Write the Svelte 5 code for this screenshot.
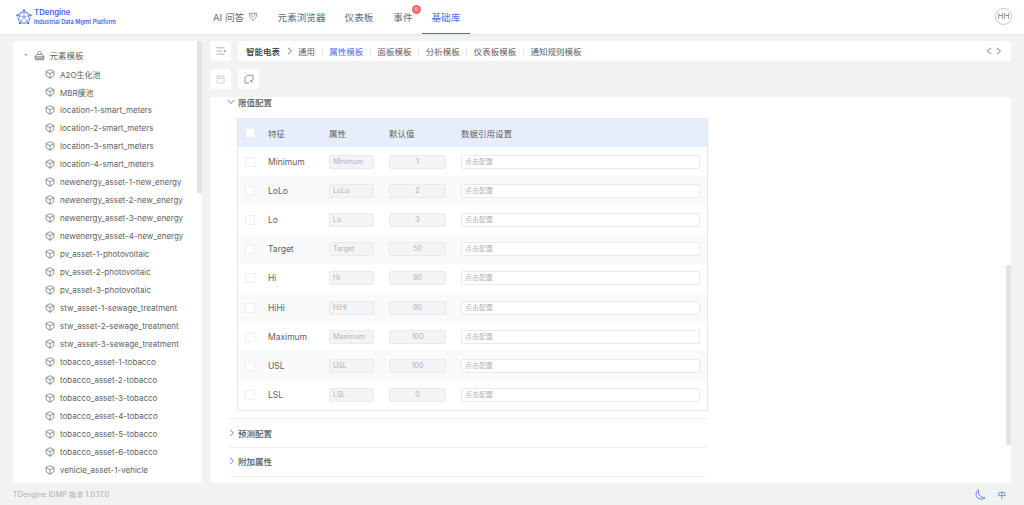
<script>
  const nav = ['元素浏览器', '仪表板'];
  const tree = ['A2O生化池','MBR膜池','location-1-smart_meters','location-2-smart_meters','location-3-smart_meters','location-4-smart_meters','newenergy_asset-1-new_energy','newenergy_asset-2-new_energy','newenergy_asset-3-new_energy','newenergy_asset-4-new_energy','pv_asset-1-photovoltaic','pv_asset-2-photovoltaic','pv_asset-3-photovoltaic','stw_asset-1-sewage_treatment','stw_asset-2-sewage_treatment','stw_asset-3-sewage_treatment','tobacco_asset-1-tobacco','tobacco_asset-2-tobacco','tobacco_asset-3-tobacco','tobacco_asset-4-tobacco','tobacco_asset-5-tobacco','tobacco_asset-6-tobacco','vehicle_asset-1-vehicle'];
  const tabs = ['面板模板','分析模板','仪表板模板','通知规则模板'];
  const rows = [['Minimum','1'],['LoLo','2'],['Lo','3'],['Target','50'],['Hi','80'],['HiHi','90'],['Maximum','100'],['USL','100'],['LSL','0']];
</script>

<div class="page">
  <header class="top">
    <div class="logo">
      <svg width="16" height="16" viewBox="0 0 18 18" fill="none" stroke="#4f74ee" stroke-width=".7">
        <path d="M9 1.500 16.500 7 13.700 16H4.300L1.500 7Z"/><path d="M9 1.500 9 9M1.500 7 9 9 16.500 7M4.300 16 9 9 13.700 16M5 4.300 13 4.300 15 11.500 9 16 3 11.500Z"/>
        <g fill="#3e63e8" stroke="none"><circle cx="9" cy="1.500" r="1.100"/><circle cx="1.500" cy="7" r="1.100"/><circle cx="16.500" cy="7" r="1.100"/><circle cx="4.300" cy="16" r="1.100"/><circle cx="13.700" cy="16" r="1.100"/></g>
      </svg>
      <div class="logotext"><b>TDengine</b><span>Industrial Data Mgmt Platform</span></div>
    </div>
    <nav>
      <a href="#a" class="ai">AI 问答
        <svg width="10" height="10" viewBox="0 0 10 10" fill="none" stroke="#74808f" stroke-width=".7" stroke-linejoin="round"><path d="M1 1.300H9L8.200 4.800 5 8.800 1.800 4.800ZM3 1.300C3 4 5 5 5 5S7 4 7 1.300"/></svg>
      </a>
      {#each nav as n}<a href="#a">{n}</a>{/each}
      <a href="#a" class="ev">事件<i>0</i></a>
      <a href="#a" class="on">基础库</a>
    </nav>
    <div class="avatar">HH</div>
  </header>

  <main class="body">
    <aside class="side">
      <div class="node root">
        <span class="caret"></span>
        <svg width="11" height="11" viewBox="0 0 11 11" fill="none" stroke="#666" stroke-width=".8" stroke-linejoin="round"><path d="M3.500 4.500C3.500 .5 7.500 .5 7.500 4.500ZM2.500 4.500 1 6.800H10L8.500 4.500M1 6.800V8.300H10V6.800M1 9.800H10"/></svg>
        元素模板
      </div>
      {#each tree as t}
        <div class="node leaf">
          <svg width="10" height="10" viewBox="0 0 10 10" fill="none" stroke="#666" stroke-width=".7" stroke-linejoin="round"><path d="M5 .7 9 2.600 8.700 6.800 5 9.300 1.300 6.800 1 2.600ZM1 2.600 5 4.600 9 2.600M5 4.600V9.300"/></svg>
          {t}
        </div>
      {/each}
      <div class="sbar"></div>
    </aside>

    <section class="right">
      <div class="bar">
        <button class="ib" aria-label="toggle">
          <svg width="10" height="10" viewBox="0 0 10 10" fill="none" stroke="#777" stroke-width=".6"><path d="M.5 1.800H8.500M.5 5H6M.5 8.200H8.500M9.200 4 7.800 5 9.200 6Z"/></svg>
        </button>
        <div class="tabs">
          <b>智能电表</b>
          <svg class="crumb" width="6" height="8" viewBox="0 0 6 8" fill="none" stroke="#555" stroke-width=".8"><path d="M1 .8 4.500 4 1 7.200"/></svg>
          <span>通用</span><em></em>
          <span class="act">属性模板</span>
          {#each tabs as t}<em></em><span>{t}</span>{/each}
          <div class="arrows">
            <svg width="6" height="8" viewBox="0 0 6 8" fill="none" stroke="#444" stroke-width=".7"><path d="M5 .8 1.500 4 5 7.200"/></svg>
            <svg width="6" height="8" viewBox="0 0 6 8" fill="none" stroke="#444" stroke-width=".7"><path d="M1 .8 4.500 4 1 7.200"/></svg>
          </div>
        </div>
      </div>
      <div class="bar">
        <button class="ib" aria-label="save">
          <svg width="9" height="9" viewBox="0 0 9 9" fill="none" stroke="#c4c4c4" stroke-width=".7"><path d="M1 1H8V8H1ZM2.500 1V3.500H6.500V1"/></svg>
        </button>
        <button class="ib" aria-label="copy">
          <svg width="10" height="10" viewBox="0 0 10 10" fill="none" stroke="#666" stroke-width=".7"><path d="M1 4 3.500 1.200H9V6.500M1 4V9H5M6 6 8.500 8.500M8.500 6 6 8.500"/></svg>
        </button>
      </div>
      <div class="content">
        <div class="sec-head first">
          <svg width="8" height="6" viewBox="0 0 8 6" fill="none" stroke="#666" stroke-width=".8"><path d="M.8 1 4 4.500 7.200 1"/></svg>
          <b>限值配置</b>
        </div>
        <div class="table">
          <div class="row head">
            <span class="cb"></span><span>特征</span><span>属性</span><span>默认值</span><span>数据引用设置</span>
          </div>
          {#each rows as r}
            <div class="row">
              <span class="cb"></span>
              <span>{r[0]}</span>
              <span class="inp dis">{r[0]}</span>
              <span class="inp dis num">{r[1]}</span>
              <span class="inp ph">点击配置</span>
            </div>
          {/each}
        </div>
        <div class="sec-head col">
          <svg width="6" height="8" viewBox="0 0 6 8" fill="none" stroke="#666" stroke-width=".8"><path d="M1 .8 4.500 4 1 7.200"/></svg>
          <b>预测配置</b>
        </div>
        <div class="sec-head col last">
          <svg width="6" height="8" viewBox="0 0 6 8" fill="none" stroke="#666" stroke-width=".8"><path d="M1 .8 4.500 4 1 7.200"/></svg>
          <b>附加属性</b>
        </div>
        <div class="sbar2"></div>
      </div>
    </section>
  </main>

  <footer class="foot">
    <span>TDengine IDMP 版本 1.0.17.0</span>
    <div class="fr">
      <svg width="11" height="11" viewBox="0 0 11 11" fill="none" stroke="#4f74ee" stroke-width=".9"><path d="M3.500 1C2.800 5.500 5 8.500 10 8.800 8.500 10.500 4.500 10.700 2.300 8.500.3 6.300.8 2.500 3.500 1Z"/></svg>
      <span class="zh">中</span>
    </div>
  </footer>
</div>

<style>
  :global(body) { margin: 0; background: #f1f3f2; }
  .page {
    width: 1024px; height: 505px; overflow: hidden; display: flex; flex-direction: column;
    font-family: Inter, "Noto Sans CJK SC", sans-serif; font-size: 8.500px; color: #5f5f5f; background: #f1f3f2;
  }
  .top { height: 34px; background: #fff; display: flex; align-items: stretch; box-shadow: 0 1px 1px #e6e8e8; position: relative; z-index: 1; flex: none; }
  .logo { width: 213px; flex: none; display: flex; align-items: center; gap: 2px; padding-left: 16px; box-sizing: border-box; color: #3f66ea; }
  .logotext { display: flex; flex-direction: column; line-height: 9px; }
  .logotext b { font-size: 7.800px; font-weight: 600; }
  .logotext span { font-size: 5.700px; font-weight: 600; white-space: nowrap; }
  nav { display: flex; flex: 1; font-size: 9.600px; }
  nav a { color: #5c6b7c; text-decoration: none; display: flex; align-items: center; padding: 0 9.500px; gap: 4px; position: relative; box-sizing: border-box; height: 34px; }
  nav a.ai { padding: 0 10px 0 0; }
  nav a.on { color: #4a6eec; border-bottom: 1px solid #4a6eec; padding: 1px 10px 0; margin-left: -1px; }
  nav a.ev { margin-left: 1px; padding-right: 10px; }
  nav a i { position: absolute; top: 5px; left: 28px; width: 9px; height: 9px; border-radius: 50%; background: #f0696b; color: #fff; font-style: normal; font-size: 5px; line-height: 9px; text-align: center; }
  .avatar { width: 15px; height: 15px; border: 1px solid #bcc9e0; border-radius: 50%; margin: 8px 12px 0 0; font-size: 8px; line-height: 15px; text-align: center; color: #6a7fa3; }
  .body { flex: 1; min-height: 0; display: flex; gap: 8px; padding: 7px 13px 0; }
  .side { width: 189px; flex: none; background: #fff; border-radius: 3px; padding: 6px 0 0 0; box-sizing: border-box; position: relative; overflow: hidden; }
  .node { height: 18px; display: flex; align-items: center; white-space: nowrap; }
  .root { padding-left: 10.500px; gap: 5px; margin: -1px 0 1px; }
  .caret { width: 0; height: 0; border: 2px solid transparent; border-top: 2.500px solid #aaa; border-bottom: 0; margin-right: 1px; }
  .leaf { padding-left: 32px; gap: 5px; font-size: 8px; }
  .sbar { position: absolute; right: 0; top: 0; width: 5px; height: 152px; background: #e3e3e3; }
  .right { flex: 1; min-width: 0; display: flex; flex-direction: column; gap: 8px; }
  .bar { display: flex; gap: 7px; height: 20px; flex: none; }
  .ib { width: 21px; height: 20px; padding: 0; border: 0; border-radius: 3px; background: #fff; display: flex; align-items: center; justify-content: center; }
  .tabs { flex: 1; background: #fff; border-radius: 3px; display: flex; align-items: center; padding: 0 8px; color: #606060; }
  .tabs b { color: #333; font-weight: 500; }
  .crumb { margin: 0 5px 0 7px; }
  .tabs em { width: 1px; height: 7px; background: #e2e4e6; margin: 0 6.600px; }
  .tabs .act { color: #4a6eec; }
  .arrows { margin-left: auto; display: flex; gap: 4px; padding-right: 1px; }
  .content { flex: 1; min-height: 0; background: #fff; border-radius: 3px; position: relative; overflow: hidden; padding: 0 303px 0 16px; box-sizing: border-box; }
  .sec-head { display: flex; align-items: center; gap: 3px; color: #555; }
  .sec-head b { font-weight: 500; }
  .first { margin-top: -9px; height: 30px; padding: 0 0 2px 1px; box-sizing: border-box; }
  .col { height: 29px; border-top: 1px solid #eef0f4; box-sizing: border-box; margin-left: 2px; padding-left: 1px; }
  .last { height: 30px; border-bottom: 1px solid #eef0f4; padding-bottom: 1px; }
  .table { margin-left: 11px; border: solid #e3e6ee; border-width: 0 1px 1px; margin-bottom: 7px; }
  .row { display: grid; grid-template-columns: 23px 61px 60px 72px 239px; height: 29.200px; align-items: center; padding-left: 7px; }
  .row:nth-child(odd) { background: #f9fafa; }
  .row.head { background: #e6eefc; height: 29px; }
  .cb { width: 8px; height: 8px; border: 1px solid #eceef0; border-radius: 1px; background: #fff; }
  .inp { height: 14px; box-sizing: border-box; border: 1px solid #e8eaef; border-radius: 2px; line-height: 12px; padding: 0 3px; font-size: 7px; background: #fff; }
  .dis { width: 45px; background: #f3f4f6; color: #b0b3b8; }
  .num { width: 57px; text-align: center; }
  .ph { color: #b5b5b5; }
  .sbar2 { position: absolute; right: 0; top: 168px; width: 5px; height: 180px; background: #e3e3e3; }
  .foot { height: 22px; flex: none; display: flex; align-items: center; justify-content: space-between; padding: 0 13px; color: #a9adb0; font-size: 7.300px; }
  .fr { display: flex; align-items: center; gap: 11px; color: #4a6eec; margin-right: 5px; }
  .zh { font-size: 8.500px; }
</style>
